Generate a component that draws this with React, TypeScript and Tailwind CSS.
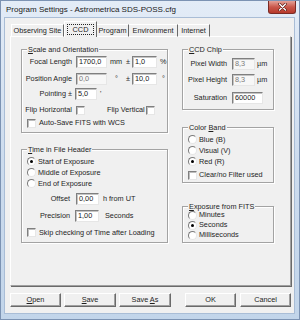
import type { ReactNode } from "react";

function Field({
  value,
  className,
  disabled,
}: {
  value: string;
  className: string;
  disabled?: boolean;
}) {
  return (
    <div
      className={`h-[12px] shrink-0 flex items-center pl-[2px] border border-t-[#7f7f7f] border-l-[#7f7f7f] border-r-[#e6e6e6] border-b-[#e6e6e6] shadow-[inset_1px_1px_0_#c4c4c4] ${
        disabled ? "bg-[#f7f7f7] text-[#7a7a7a]" : "bg-white text-[#202020]"
      } ${className}`}
    >
      {value}
    </div>
  );
}

function Check() {
  return (
    <span className="block w-[9px] h-[9px] shrink-0 bg-white border border-t-[#7f7f7f] border-l-[#7f7f7f] border-r-[#e6e6e6] border-b-[#e6e6e6] shadow-[inset_1px_1px_0_#bdbdbd]" />
  );
}

function Radio({ checked }: { checked?: boolean }) {
  return (
    <span className="w-[9px] h-[9px] shrink-0 rounded-full bg-white border border-t-[#7a7a7a] border-l-[#7a7a7a] border-r-[#e6e6e6] border-b-[#e6e6e6] flex items-center justify-center">
      {checked && <span className="w-[3px] h-[3px] rounded-full bg-black" />}
    </span>
  );
}

function Group({
  title,
  className,
  children,
}: {
  title: ReactNode;
  className: string;
  children: ReactNode;
}) {
  return (
    <div
      className={`relative border border-[#a3a3a3] shadow-[1px_1px_0_#ffffff,inset_1px_1px_0_#ffffff] ${className}`}
    >
      <span className="absolute left-[5px] top-[-4px] px-[1px] bg-[#f0f0f0] leading-[7px] whitespace-nowrap">
        {title}
      </span>
      {children}
    </div>
  );
}

function Btn({ children, className }: { children: ReactNode; className: string }) {
  return (
    <div
      className={`h-[14px] shrink-0 flex items-center justify-center bg-[#f0f0f0] border border-t-white border-l-white border-r-[#6a6a6a] border-b-[#6a6a6a] shadow-[inset_-1px_-1px_0_#a0a0a0] ${className}`}
    >
      <span className="whitespace-pre">{children}</span>
    </div>
  );
}

const U = ({ c }: { c: string }) => <span className="underline underline-offset-1">{c}</span>;

export default function App() {
  return (
    <div className="w-[300px] h-[320px] flex flex-col bg-gradient-to-b from-[#e3ecf7] via-[#cddcee] to-[#c2d5ea] border border-[#7c93b3] font-['Liberation_Sans',Arial,sans-serif] text-[7.3px] leading-none text-[#1e1e1e] overflow-hidden">
      {/* title bar */}
      <div className="h-[17px] shrink-0 flex items-start">
        <span className="pl-[5px] pt-[5px] text-[8px] text-[#1a1a1a] whitespace-nowrap">
          Program Settings - Astrometrica SDS-POSS.cfg
        </span>
        <div className="ml-auto mr-[3px] w-[28px] h-[13px] rounded-b-[3px] border border-[#7a2b25] border-t-0 bg-gradient-to-b from-[#e3a198] via-[#c9574a] to-[#b7392b] flex items-center justify-center">
          <svg width="9" height="8" viewBox="0 0 9 8">
            <path d="M1.5 1 L7.5 7 M7.5 1 L1.5 7" stroke="#5a1d17" strokeWidth="2.6" strokeLinecap="round" />
            <path d="M1.5 1 L7.5 7 M7.5 1 L1.5 7" stroke="#ffffff" strokeWidth="1.4" strokeLinecap="round" />
          </svg>
        </div>
      </div>

      {/* client area */}
      <div className="flex-1 ml-[4px] mr-[5px] mb-[6px] bg-[#f0f0f0] flex flex-col pl-[5px] pt-[4px] shadow-[0_0_0_1px_#a9bdd6]">
        {/* tabs */}
        <div className="h-[15px] flex items-end pl-[1px] relative z-10 -mb-[1px]">
          <div className="w-[53px] h-[13px] flex items-center justify-center border-t border-l border-t-white border-l-white border-r border-r-[#6a6a6a] border-b border-b-white">
            Observing Site
          </div>
          <div className="w-[33px] h-[16px] flex items-center justify-center bg-[#f0f0f0] border-t border-l border-t-white border-l-white border-r border-r-[#6a6a6a]">
            <span className="border border-dotted border-[#222] px-[5px] py-[1px]">CCD</span>
          </div>
          <div className="w-[32px] h-[13px] flex items-center justify-center border-t border-t-white border-r border-r-[#6a6a6a] border-b border-b-white">
            Program
          </div>
          <div className="w-[49px] h-[13px] flex items-center justify-center border-t border-t-white border-r border-r-[#6a6a6a] border-b border-b-white">
            Environment
          </div>
          <div className="w-[32px] h-[13px] flex items-center justify-center border-t border-t-white border-r border-r-[#6a6a6a] border-b border-b-white">
            Internet
          </div>
        </div>

        {/* tab page */}
        <div className="w-[281px] h-[250px] shrink-0 border border-t-white border-l-white border-r-[#a0a0a0] border-b-[#a0a0a0] shadow-[1px_1px_0_#6a6a6a] flex gap-[14px] pl-[10px] pt-[12px]">
          {/* left column */}
          <div className="w-[147px] flex flex-col">
            <Group
              className="h-[84px]"
              title={
                <>
                  <U c="S" />
                  cale and Orientation
                </>
              }
            >
              <div className="mt-[6px] h-[12px] flex items-center">
                <span className="w-[50px] text-right">Focal Length</span>
                <Field value="1700,0" className="ml-[4px] w-[31px]" />
                <span className="w-[19px] pl-[3px]">mm</span>
                <span className="w-[6px]">±</span>
                <Field value="1,0" className="w-[25px]" />
                <span className="ml-[3px]">%</span>
              </div>
              <div className="mt-[5px] h-[12px] flex items-center">
                <span className="w-[50px] text-right whitespace-nowrap">Position Angle</span>
                <Field value="0,0" className="ml-[4px] w-[31px]" disabled />
                <span className="w-[19px] pl-[8px]">°</span>
                <span className="w-[6px]">±</span>
                <Field value="10,0" className="w-[25px]" />
                <span className="ml-[5px]">°</span>
              </div>
              <div className="mt-[3px] h-[12px] flex items-center">
                <span className="w-[50px] text-right">Pointing ±</span>
                <Field value="5,0" className="ml-[3px] w-[22px]" />
                <span className="ml-[3px]">'</span>
              </div>
              <div className="mt-[4px] h-[12px] flex items-center">
                <span className="w-[50px] text-right whitespace-nowrap">Flip Horizontal</span>
                <span className="ml-[4px]">
                  <Check />
                </span>
                <span className="ml-[22px] whitespace-nowrap">Flip Vertical</span>
                <span className="ml-[1px]">
                  <Check />
                </span>
              </div>
              <div className="mt-[1px] h-[12px] flex items-center pl-[5px]">
                <Check />
                <span className="ml-[3px] whitespace-nowrap">Auto-Save FITS with WCS</span>
              </div>
            </Group>

            <Group
              className="mt-[16px] h-[94px]"
              title={
                <>
                  <U c="T" />
                  ime in File Header
                </>
              }
            >
              <div className="mt-[6px] flex flex-col pl-[5px]">
                {[
                  ["Start of Exposure", true],
                  ["Middle of Exposure", false],
                  ["End of Exposure", false],
                ].map(([label, on]) => (
                  <div key={label as string} className="h-[11px] flex items-center">
                    <Radio checked={on as boolean} />
                    <span className="ml-[2px]">{label as string}</span>
                  </div>
                ))}
              </div>
              <div className="mt-[4px] h-[12px] flex items-center">
                <span className="w-[48px] text-right">Offset</span>
                <Field value="0,00" className="ml-[6px] w-[23px]" />
                <span className="ml-[4px]">h from UT</span>
              </div>
              <div className="mt-[5px] h-[12px] flex items-center">
                <span className="w-[48px] text-right">Precision</span>
                <Field value="1,00" className="ml-[5px] w-[24px]" />
                <span className="ml-[6px]">Seconds</span>
              </div>
              <div className="mt-[5px] h-[11px] flex items-center pl-[5px]">
                <Check />
                <span className="ml-[3px] whitespace-nowrap">Skip checking of Time after Loading</span>
              </div>
            </Group>
          </div>

          {/* right column */}
          <div className="w-[92px] flex flex-col">
            <Group
              className="h-[61px]"
              title={
                <>
                  <U c="C" />
                  CD Chip
                </>
              }
            >
              <div className="mt-[8px] h-[12px] flex items-center">
                <span className="w-[44px] text-right whitespace-nowrap">Pixel Width</span>
                <Field value="8,3" className="ml-[5px] w-[23px]" disabled />
                <span className="ml-[2px]">µm</span>
              </div>
              <div className="mt-[4px] h-[12px] flex items-center">
                <span className="w-[44px] text-right whitespace-nowrap">Pixel Height</span>
                <Field value="8,3" className="ml-[5px] w-[23px]" disabled />
                <span className="ml-[2px]">µm</span>
              </div>
              <div className="mt-[6px] h-[12px] flex items-center">
                <span className="w-[44px] text-right">Saturation</span>
                <Field value="60000" className="ml-[5px] w-[31px]" />
              </div>
            </Group>

            <Group
              className="mt-[17px] h-[56px]"
              title={
                <>
                  Color <U c="B" />
                  and
                </>
              }
            >
              <div className="mt-[6px] flex flex-col pl-[5px]">
                {[
                  ["Blue (B)", false],
                  ["Visual (V)", false],
                  ["Red (R)", true],
                ].map(([label, on]) => (
                  <div key={label as string} className="h-[11px] flex items-center">
                    <Radio checked={on as boolean} />
                    <span className="ml-[2px]">{label as string}</span>
                  </div>
                ))}
                <div className="mt-[3px] h-[10px] flex items-center">
                  <Check />
                  <span className="ml-[2px] whitespace-nowrap">Clear/no Filter used</span>
                </div>
              </div>
            </Group>

            <Group
              className="mt-[23px] h-[37px]"
              title={
                <>
                  <U c="E" />
                  xposure from FITS
                </>
              }
            >
              <div className="mt-[3px] flex flex-col pl-[5px]">
                {[
                  ["Minutes", false],
                  ["Seconds", true],
                  ["Milliseconds", false],
                ].map(([label, on]) => (
                  <div key={label as string} className="h-[10px] flex items-center">
                    <Radio checked={on as boolean} />
                    <span className="ml-[2px]">{label as string}</span>
                  </div>
                ))}
              </div>
            </Group>
          </div>
        </div>

        {/* buttons */}
        <div className="mt-[7px] flex">
          <Btn className="w-[51px]">
            <U c="O" />
            pen
          </Btn>
          <Btn className="ml-[3px] w-[52px]">
            <U c="S" />
            ave
          </Btn>
          <Btn className="ml-[3px] w-[52px]">
            {"Save "}
            <U c="A" />s
          </Btn>
          <Btn className="ml-[14px] w-[51px]">OK</Btn>
          <Btn className="ml-[4px] w-[51px]">Cancel</Btn>
        </div>
      </div>
    </div>
  );
}
